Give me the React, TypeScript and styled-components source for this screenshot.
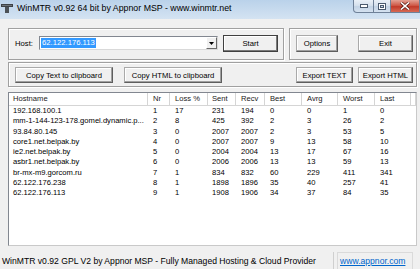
import React from 'react';
import styled, { createGlobalStyle, css } from 'styled-components';

const GlobalStyle = createGlobalStyle`
  html, body {
    margin: 0;
    padding: 0;
    background: #f0f0f0;
  }
  body {
    font-family: "Liberation Sans", Arial, sans-serif;
  }
`;

const COLS = '139px 22px 38px 28px 29px 37px 36px 37px 36px 1fr';
const PADS = [4, 5, 5, 4, 5, 5, 5, 5, 5];

const Window = styled.div`
  width: 420px;
  height: 269px;
  display: flex;
  flex-direction: column;
  overflow: hidden;
  background: #f0f0f0;
`;

const TitleBar = styled.div`
  height: 19px;
  flex: none;
  display: flex;
  align-items: flex-start;
  background: linear-gradient(#bad2ea, #d4e3f2);
`;

const AppIcon = styled.svg`
  margin: 4px 0 0 1px;
  flex: none;
`;

const TitleText = styled.span`
  margin-left: 4px;
  font-size: 8.8px;
  line-height: 17px;
  color: #000;
  white-space: nowrap;
`;

const Controls = styled.div`
  margin-left: auto;
  display: flex;
`;

const CtrlButton = styled.div<{ $w: number; $close?: boolean; $first?: boolean }>`
  width: ${p => p.$w}px;
  height: 13px;
  box-sizing: border-box;
  border: 1px solid #6f8198;
  border-top: none;
  border-left-width: ${p => (p.$first ? 1 : 0)}px;
  border-radius: ${p => (p.$first ? '0 0 0 4px' : '0')};
  display: flex;
  align-items: center;
  justify-content: center;
  background: ${p =>
    p.$close
      ? 'linear-gradient(#e3a194, #cf5a48 45%, #c23a29 55%, #d66a55)'
      : 'linear-gradient(#e9f0f7, #d6e1ed 45%, #c3d3e5 55%, #d5e2f0)'};
`;

const Client = styled.div`
  flex: 1;
  display: flex;
  flex-direction: column;
  padding: 9px 3px 3px 8px;
  min-height: 0;
`;

const TopRow = styled.div`
  display: flex;
  gap: 5px;
  height: 32px;
  flex: none;
`;

const GroupBox = styled.div`
  box-sizing: border-box;
  border: 1px solid #a0a0a0;
  box-shadow: inset 1px 1px 0 #fff, 1px 1px 0 #fff;
  display: flex;
  align-items: center;
`;

const HostGroup = styled(GroupBox)`
  width: 276px;
  padding: 0 0 2px 6px;
`;

const ActionGroup = styled(GroupBox)`
  flex: 1;
  gap: 20px;
  padding: 0 0 2px 6px;
`;

const ExportGroup = styled(GroupBox)`
  height: 25px;
  flex: none;
  margin-top: 2px;
  justify-content: space-between;
  padding: 1px 3px 0 6px;
`;

const Cluster = styled.div<{ $gap: number }>`
  display: flex;
  gap: ${p => p.$gap}px;
`;

const HostLabel = styled.span`
  width: 24px;
  font-size: 7.7px;
  color: #000;
`;

const Combo = styled.div`
  width: 179px;
  height: 14px;
  box-sizing: border-box;
  display: flex;
  background: #fff;
  border: 1px solid;
  border-color: #828790 #d9d9d9 #d9d9d9 #828790;
  margin-right: 5px;
`;

const ComboText = styled.div`
  flex: 1;
  display: flex;
  align-items: center;
  padding-left: 1px;
`;

const Selected = styled.span`
  background: #3399ff;
  color: #fff;
  font-size: 7.7px;
  line-height: 10px;
  padding: 0 1px;
`;

const DropButton = styled.div`
  width: 11px;
  box-sizing: border-box;
  background: #f0f0f0;
  border: 1px solid;
  border-color: #fff #696969 #696969 #fff;
  display: flex;
  align-items: center;
  justify-content: center;
`;

const Button = styled.button<{ $w: number; $h: number; $default?: boolean }>`
  width: ${p => p.$w}px;
  height: ${p => p.$h}px;
  box-sizing: border-box;
  margin: 0;
  padding: 0;
  font-family: "Liberation Sans", Arial, sans-serif;
  font-size: 7.7px;
  color: #000;
  background: #f0f0f0;
  border: 1px solid;
  border-color: #a9a9a9 #5e5e5e #5e5e5e #a9a9a9;
  box-shadow: inset -1px -1px 0 #a0a0a0, inset 1px 1px 0 #fff;
  ${p =>
    p.$default &&
    css`
      border-color: #404040;
      box-shadow: inset -1px -1px 0 #7a7a7a, inset 1px 1px 0 #fff;
    `}
`;

const ListView = styled.div`
  flex: 1;
  margin-top: 5px;
  background: #fff;
  border: 1px solid;
  border-color: #828790 #c9c9c9 #c9c9c9 #828790;
  display: flex;
  flex-direction: column;
  min-height: 0;
  overflow: hidden;
`;

const HeaderRow = styled.div`
  display: grid;
  grid-template-columns: ${COLS};
  height: 13px;
  box-sizing: border-box;
  border-bottom: 1px solid #d5d5d5;
`;

const HeaderCell = styled.div<{ $pad: number }>`
  padding-left: ${p => p.$pad}px;
  border-right: 1px solid #d5d5d5;
  font-size: 7.6px;
  line-height: 12px;
  color: #1a1a1a;
  white-space: nowrap;
  overflow: hidden;
`;

const DataRow = styled.div`
  display: grid;
  grid-template-columns: ${COLS};
  height: 10.25px;
`;

const Cell = styled.div<{ $pad: number }>`
  padding-left: ${p => p.$pad}px;
  font-size: 7.6px;
  line-height: 10.25px;
  color: #000;
  white-space: nowrap;
  overflow: hidden;
`;

const StatusBar = styled.div`
  height: 20px;
  flex: none;
  display: flex;
  align-items: stretch;
  padding-top: 3px;
  box-sizing: border-box;
  font-size: 8.6px;
  color: #000;
`;

const StatusPanel = styled.div<{ $w: number; $boxed?: boolean }>`
  width: ${p => p.$w}px;
  box-sizing: border-box;
  padding-left: 2px;
  display: flex;
  align-items: center;
  white-space: nowrap;
  border-right: 1px solid #cfcfcf;
  ${p =>
    p.$boxed &&
    css`
      margin-left: 3px;
      border: 1px solid #dadada;
      border-bottom: none;
    `}
`;

const Link = styled.span`
  color: #0066cc;
  text-decoration: underline;
`;

const hops = [
  ['192.168.100.1', '1', '17', '231', '194', '0', '0', '1', '0'],
  ['mm-1-144-123-178.gomel.dynamic.p...', '2', '8', '425', '392', '2', '3', '26', '2'],
  ['93.84.80.145', '3', '0', '2007', '2007', '2', '3', '53', '5'],
  ['core1.net.belpak.by', '4', '0', '2007', '2007', '9', '13', '58', '10'],
  ['ie2.net.belpak.by', '5', '0', '2004', '2004', '13', '17', '67', '16'],
  ['asbr1.net.belpak.by', '6', '0', '2006', '2006', '13', '13', '59', '13'],
  ['br-mx-m9.gorcom.ru', '7', '1', '834', '832', '60', '229', '411', '341'],
  ['62.122.176.238', '8', '1', '1898', '1896', '35', '40', '257', '41'],
  ['62.122.176.113', '9', '1', '1908', '1906', '34', '37', '84', '35'],
];

const headers = ['Hostname', 'Nr', 'Loss %', 'Sent', 'Recv', 'Best', 'Avrg', 'Worst', 'Last'];

const App: React.FC = () => {
  return (
    <>
      <GlobalStyle />
      <Window>
        <TitleBar>
          <AppIcon width="12" height="9" viewBox="0 0 12 9">
            <rect x="0" y="0" width="12" height="3" fill="#3d4247" />
            <rect x="4" y="3" width="4" height="6" fill="#4b5157" />
            <rect x="1" y="1" width="10" height="1" fill="#6b7278" />
          </AppIcon>
          <TitleText>WinMTR v0.92 64 bit by Appnor MSP - www.winmtr.net</TitleText>
          <Controls>
            <CtrlButton $w={21} $first>
              <svg width="8" height="4" viewBox="0 0 8 4">
                <rect x="0.5" y="0.5" width="7" height="3" fill="#fff" stroke="#4a5a6e" />
              </svg>
            </CtrlButton>
            <CtrlButton $w={17}>
              <svg width="8" height="7" viewBox="0 0 8 7">
                <rect x="0.5" y="0.5" width="7" height="6" fill="none" stroke="#4a5a6e" />
                <rect x="1.5" y="1.5" width="5" height="4" fill="none" stroke="#fff" />
                <rect x="2.5" y="2.5" width="3" height="2" fill="none" stroke="#4a5a6e" />
              </svg>
            </CtrlButton>
            <CtrlButton $w={29} $close>
              <svg width="10" height="8" viewBox="0 0 10 8">
                <path d="M1 0.5 L9 7.5 M9 0.5 L1 7.5" stroke="#5a1c14" strokeWidth="3" />
                <path d="M1 0.5 L9 7.5 M9 0.5 L1 7.5" stroke="#fff" strokeWidth="1.6" />
              </svg>
            </CtrlButton>
          </Controls>
        </TitleBar>

        <Client>
          <TopRow>
            <HostGroup>
              <HostLabel>Host:</HostLabel>
              <Combo>
                <ComboText>
                  <Selected>62.122.176.113</Selected>
                </ComboText>
                <DropButton>
                  <svg width="5" height="3" viewBox="0 0 5 3">
                    <path d="M0 0 H5 L2.5 3 Z" fill="#000" />
                  </svg>
                </DropButton>
              </Combo>
              <Button $w={55} $h={17} $default>Start</Button>
            </HostGroup>
            <ActionGroup>
              <Button $w={42} $h={17}>Options</Button>
              <Button $w={55} $h={17}>Exit</Button>
            </ActionGroup>
          </TopRow>

          <ExportGroup>
            <Cluster $gap={11}>
              <Button $w={98} $h={16}>Copy Text to clipboard</Button>
              <Button $w={98} $h={16}>Copy HTML to clipboard</Button>
            </Cluster>
            <Cluster $gap={5}>
              <Button $w={57} $h={16}>Export TEXT</Button>
              <Button $w={55} $h={16}>Export HTML</Button>
            </Cluster>
          </ExportGroup>

          <ListView>
            <HeaderRow>
              {headers.map((h, i) => (
                <HeaderCell key={h} $pad={PADS[i]}>{h}</HeaderCell>
              ))}
              <HeaderCell $pad={0} />
            </HeaderRow>
            {hops.map(row => (
              <DataRow key={row[1]}>
                {row.map((v, i) => (
                  <Cell key={i} $pad={PADS[i]}>{v}</Cell>
                ))}
              </DataRow>
            ))}
          </ListView>
        </Client>

        <StatusBar>
          <StatusPanel $w={334}>
            WinMTR v0.92 GPL V2 by Appnor MSP - Fully Managed Hosting &amp; Cloud Provider
          </StatusPanel>
          <StatusPanel $w={76} $boxed>
            <Link>www.appnor.com</Link>
          </StatusPanel>
        </StatusBar>
      </Window>
    </>
  );
};

export default App;
